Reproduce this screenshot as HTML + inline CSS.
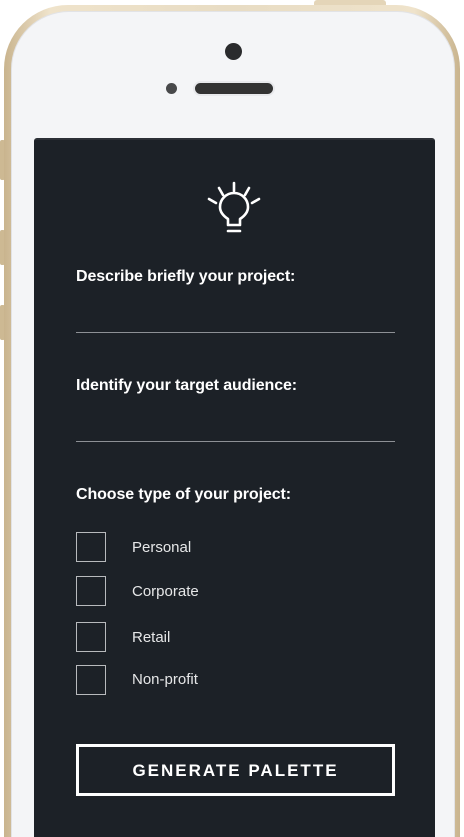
<!DOCTYPE html>
<html><head><style>
html,body{margin:0;padding:0;width:464px;height:837px;overflow:hidden;background:#fff;font-family:"Liberation Sans",sans-serif}
#wrap{position:relative;width:464px;height:837px;overflow:hidden}
.gold{position:absolute;left:4px;top:5px;width:456px;height:832px;border-radius:64px 64px 0 0;background:linear-gradient(90deg,#c9b48e,#efe3cb 10%,#e8dcc3 50%,#efe3cb 90%,#c9b48e)}
.btn1{position:absolute;left:314px;top:0;width:72px;height:6px;background:#e4d5b8;border-radius:3px 3px 0 0}
.body{position:absolute;left:11px;top:11px;width:442px;height:825px;border-radius:58px 58px 0 0;background:#f4f5f7;border:1px solid #e2e3e6;border-bottom:0}
.screen{position:absolute;left:34px;top:138px;width:401px;height:697px;background:#1c2127;border-radius:3px 3px 0 0;border-top:2px solid #2c3036}
.lbl{position:absolute;left:76px;color:#fff;font-size:16px;font-weight:bold;letter-spacing:-.1px}
.line{position:absolute;left:76px;width:319px;height:1px;background:#8d9095}
.cb{position:absolute;left:76px;width:28px;height:28px;border:1px solid #b8babd}
.ct{position:absolute;left:132px;color:#e6e7e8;font-size:15px}
.gen{position:absolute;left:76px;top:744px;width:313px;height:46px;border:3px solid #fff;color:#fff;font-weight:bold;font-size:17px;letter-spacing:2px;text-align:center;line-height:48px}
.side{position:absolute;left:0;width:5px;background:#cdb993;border-radius:2px}
</style></head><body><div id="wrap">
<div class="btn1"></div>
<div class="side" style="top:140px;height:40px"></div>
<div class="side" style="top:230px;height:35px"></div>
<div class="side" style="top:305px;height:35px"></div>
<div class="gold"></div>
<div class="body"></div>
<div style="position:absolute;left:225px;top:43px;width:17px;height:17px;border-radius:50%;background:#2a2b2d"></div>
<div style="position:absolute;left:166px;top:83px;width:11px;height:11px;border-radius:50%;background:#48494b"></div>
<div style="position:absolute;left:195px;top:83px;width:78px;height:11px;border-radius:6px;background:#333;box-shadow:0 0 0 2px #e8e9ec"></div>
<div class="screen"></div>
<svg style="position:absolute;left:205px;top:180px" width="58" height="56" viewBox="0 0 58 56" fill="none" stroke="#fff" stroke-width="2.6" stroke-linecap="round">
<line x1="29" y1="3" x2="29" y2="11"/><line x1="14" y1="8" x2="18" y2="15"/><line x1="44" y1="8" x2="40" y2="15"/>
<line x1="4" y1="19" x2="11" y2="23"/><line x1="54" y1="19" x2="47" y2="23"/>
<path d="M23 45 L23 39 C17 35 15 31 15 27 A14 14 0 0 1 43 27 C43 31 41 35 35 39 L35 45 Z" stroke-linejoin="round"/>
<line x1="23" y1="51" x2="35" y2="51"/>
</svg>
<div class="lbl" style="top:268px">Describe briefly your project:</div>
<div class="line" style="top:332px"></div>
<div class="lbl" style="top:377px">Identify your target audience:</div>
<div class="line" style="top:441px"></div>
<div class="lbl" style="top:486px">Choose type of your project:</div>
<div class="cb" style="top:532px"></div><div class="ct" style="top:539px">Personal</div>
<div class="cb" style="top:576px"></div><div class="ct" style="top:583px">Corporate</div>
<div class="cb" style="top:622px"></div><div class="ct" style="top:629px">Retail</div>
<div class="cb" style="top:665px"></div><div class="ct" style="top:671px">Non-profit</div>
<div class="gen">GENERATE PALETTE</div>
</div></body></html>
